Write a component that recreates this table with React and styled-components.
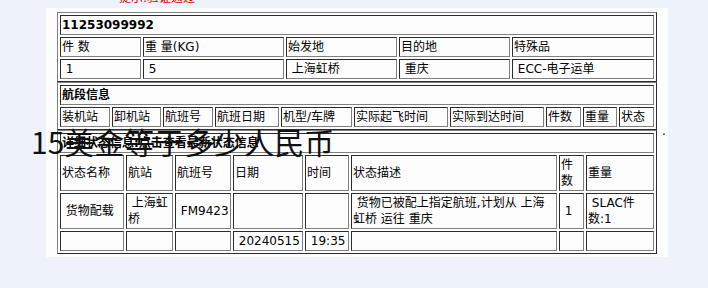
import React from 'react';
import styled, { createGlobalStyle } from 'styled-components';

const GlobalStyle = createGlobalStyle`
  html, body {
    margin: 0;
    padding: 0;
    background: #eef2fb;
  }
  body {
    font-family: "DejaVu Sans", "Noto Sans CJK SC", sans-serif;
    font-size: 12px;
    color: #000;
    overflow: hidden;
  }
`;

const Page = styled.div`
  position: relative;
  height: 300px;
  margin-top: -10px;
  padding-left: 46px;
`;

const Notice = styled.div`
  height: 16px;
  line-height: 16px;
  margin-left: 73px;
  color: #e00000;
`;

const Panel = styled.div`
  width: 622px;
  box-sizing: border-box;
  margin-top: 2px;
  padding: 4px 11px 3px;
  background: #fdfdfd;
`;

// old-school border="1" table, redone as a grid
const Table = styled.div`
  display: grid;
  grid-template-columns: ${({ cols }) => cols};
  gap: 2px;
  padding: 2px;
  width: 600px;
  box-sizing: border-box;
  border: 1px outset gray;
`;

const Cell = styled.div`
  display: flex;
  align-items: center;
  min-width: 0;
  padding: 1px;
  line-height: 16px;
  border: 1px inset gray;
  font-weight: ${({ $bold }) => ($bold ? 'bold' : 'normal')};
  grid-column: ${({ $full }) => ($full ? '1 / -1' : 'auto')};
  white-space: ${({ $nowrap }) => ($nowrap ? 'nowrap' : 'normal')};
  overflow-wrap: anywhere;
`;

const Overlay = styled.div`
  position: absolute;
  left: 31px;
  top: 133px;
  font-family: "Noto Sans CJK SC", sans-serif;
  font-size: 30px;
  line-height: 36px;
  color: #111;
  white-space: nowrap;
  pointer-events: none;
`;

const Dot = styled.span`
  position: absolute;
  left: 662px;
  top: 133px;
  line-height: 16px;
`;

const sp = '\u00a0';

const summary = {
  heads: ['件 数', '重 量(KG)', '始发地', '目的地', '特殊品'],
  values: ['1', '5', '上海虹桥', '重庆', 'ECC-电子运单'],
};

const legHeads = ['装机站', '卸机站', '航班号', '航班日期', '机型/车牌', '实际起飞时间', '实际到达时间', '件数', '重量', '状态'];

const statusHeads = ['状态名称', '航站', '航班号', '日期', '时间', '状态描述', '件数', '重量'];

const statusRows = [
  ['货物配载', '上海虹桥', 'FM9423', '', '', '货物已被配上指定航班,计划从 上海 虹桥 运往 重庆', '1', 'SLAC件数:1'],
  ['', '', '', '20240515', '19:35', '', '', ''],
];

export default function App() {
  return (
    <>
      <GlobalStyle />
      <Page>
        <Notice>提示:验证通过</Notice>
        <Panel>
          <Table cols="81px 141px 111px 111px 142px">
            <Cell $full $bold>11253099992</Cell>
            {summary.heads.map((h) => (
              <Cell key={h}>{h}</Cell>
            ))}
            {summary.values.map((v) => (
              <Cell key={v}>{sp + v}</Cell>
            ))}
          </Table>

          <Table cols="50px 49px 50px 64px 71px 94px 94px 35px 34px 35px">
            <Cell $full $bold>航段信息</Cell>
            {legHeads.map((h) => (
              <Cell key={h}>{h}</Cell>
            ))}
          </Table>

          <Table cols="64px 47px 56px 70px 44px 206px 25px 68px">
            <Cell $full $bold>详细状态信息:点击查看最新状态信息</Cell>
            {statusHeads.map((h, i) => (
              <Cell key={i}>{h}</Cell>
            ))}
            {statusRows.map((row, r) =>
              row.map((v, i) => (
                <Cell key={r + '-' + i} $nowrap={v === 'FM9423'}>
                  {v ? sp + v : ''}
                </Cell>
              ))
            )}
          </Table>
        </Panel>
        <Overlay>15美金等于多少人民币</Overlay>
        <Dot>.</Dot>
      </Page>
    </>
  );
}
